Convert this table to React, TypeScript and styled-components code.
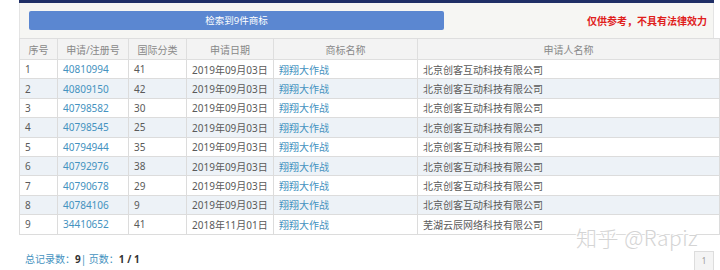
import styled, { createGlobalStyle } from "styled-components";

const GlobalStyle = createGlobalStyle`
  body {
    margin: 0;
    background: #fff;
    font-family: "Noto Sans", "Noto Sans CJK SC", sans-serif;
  }
`;

const Page = styled.div`
  position: relative;
  width: 720px;
  height: 270px;
  overflow: hidden;
`;

const Panel = styled.section`
  margin-left: 19px;
  width: 695px;
  border-top: 3px solid #1f2f66;
`;

const TopBar = styled.div`
  display: flex;
  align-items: center;
  justify-content: space-between;
  height: 35px;
  padding: 0 6px 0 9px;
  background: #f6f6f3;
  border-left: 1px solid #e4e4e4;
  border-right: 1px solid #e4e4e4;
`;

const Banner = styled.div`
  width: 415px;
  height: 19px;
  border-radius: 2px;
  background: #5b87d1;
  color: #fff;
  font-size: 9.5px;
  line-height: 19px;
  text-align: center;
`;

const Notice = styled.span`
  color: #e0201b;
  font-size: 10px;
  font-weight: bold;
`;

const Table = styled.table`
  width: 694px;
  border-collapse: collapse;
  table-layout: fixed;
  font-size: 10px;
  color: #5a5a5a;
`;

const Th = styled.th<{ $w: number }>`
  width: ${(p) => p.$w}px;
  height: 20px;
  padding: 0;
  background: #f3f3f3;
  border: 1px solid #dedede;
  color: #888;
  font-weight: normal;
  text-align: center;
`;

const Row = styled.tr<{ $alt: boolean }>`
  background: ${(p) => (p.$alt ? "#edf2f7" : "#fff")};
`;

const Td = styled.td`
  height: 18.4px;
  padding: 0 5px;
  border: 1px solid #dcdcdc;
  white-space: nowrap;
`;

const Link = styled.span`
  color: #4592c0;
`;

const Footer = styled.div`
  display: flex;
  align-items: center;
  justify-content: space-between;
  margin-top: 12px;
  padding: 0 0 0 6px;
  font-size: 10px;
  color: #333;
`;

const Label = styled.span`
  color: #4592c0;
`;

const Strong = styled.b`
  color: #333;
`;

const PageBox = styled.span`
  width: 18px;
  height: 18px;
  margin-top: 4px;
  border: 1px solid #ddd;
  background: #f4f4f4;
  color: #999;
  font-size: 8px;
  line-height: 18px;
  text-align: center;
`;

const Watermark = styled.div`
  position: absolute;
  left: 576px;
  top: 222px;
  font-family: "Noto Sans CJK SC", sans-serif;
  font-size: 21px;
  font-weight: 300;
  color: #d4d4d4;
  text-shadow: 0 0 1px #fff, 1px 1px 0 #fff, -1px -1px 0 #fff;
  letter-spacing: 0.5px;
  pointer-events: none;
`;

const columns = [
  { title: "序号", w: 37 },
  { title: "申请/注册号", w: 70 },
  { title: "国际分类", w: 57 },
  { title: "申请日期", w: 86 },
  { title: "商标名称", w: 143 },
  { title: "申请人名称", w: 301 },
];

const rows = [
  ["40810994", "41", "2019年09月03日", "北京创客互动科技有限公司"],
  ["40809150", "42", "2019年09月03日", "北京创客互动科技有限公司"],
  ["40798582", "30", "2019年09月03日", "北京创客互动科技有限公司"],
  ["40798545", "25", "2019年09月03日", "北京创客互动科技有限公司"],
  ["40794944", "35", "2019年09月03日", "北京创客互动科技有限公司"],
  ["40792976", "38", "2019年09月03日", "北京创客互动科技有限公司"],
  ["40790678", "29", "2019年09月03日", "北京创客互动科技有限公司"],
  ["40784106", "9", "2019年09月03日", "北京创客互动科技有限公司"],
  ["34410652", "41", "2018年11月01日", "芜湖云辰网络科技有限公司"],
];

const App = () => {
  return (
    <Page>
      <GlobalStyle />
      <Panel>
        <TopBar>
          <Banner>检索到9件商标</Banner>
          <Notice>仅供参考，不具有法律效力</Notice>
        </TopBar>
        <Table>
          <thead>
            <tr>
              {columns.map((c) => (
                <Th key={c.title} $w={c.w}>
                  {c.title}
                </Th>
              ))}
            </tr>
          </thead>
          <tbody>
            {rows.map((r, i) => (
              <Row key={r[0]} $alt={i % 2 === 1}>
                <Td>{i + 1}</Td>
                <Td>
                  <Link>{r[0]}</Link>
                </Td>
                <Td>{r[1]}</Td>
                <Td>{r[2]}</Td>
                <Td>
                  <Link>翔翔大作战</Link>
                </Td>
                <Td>{r[3]}</Td>
              </Row>
            ))}
          </tbody>
        </Table>
        <Footer>
          <span>
            <Label>总记录数：</Label>
            <Strong>9</Strong>
            <Label>| 页数：</Label>
            <Strong>1 / 1</Strong>
          </span>
          <PageBox>1</PageBox>
        </Footer>
      </Panel>
      <Watermark>知乎 @Rapiz</Watermark>
    </Page>
  );
};

export default App;
